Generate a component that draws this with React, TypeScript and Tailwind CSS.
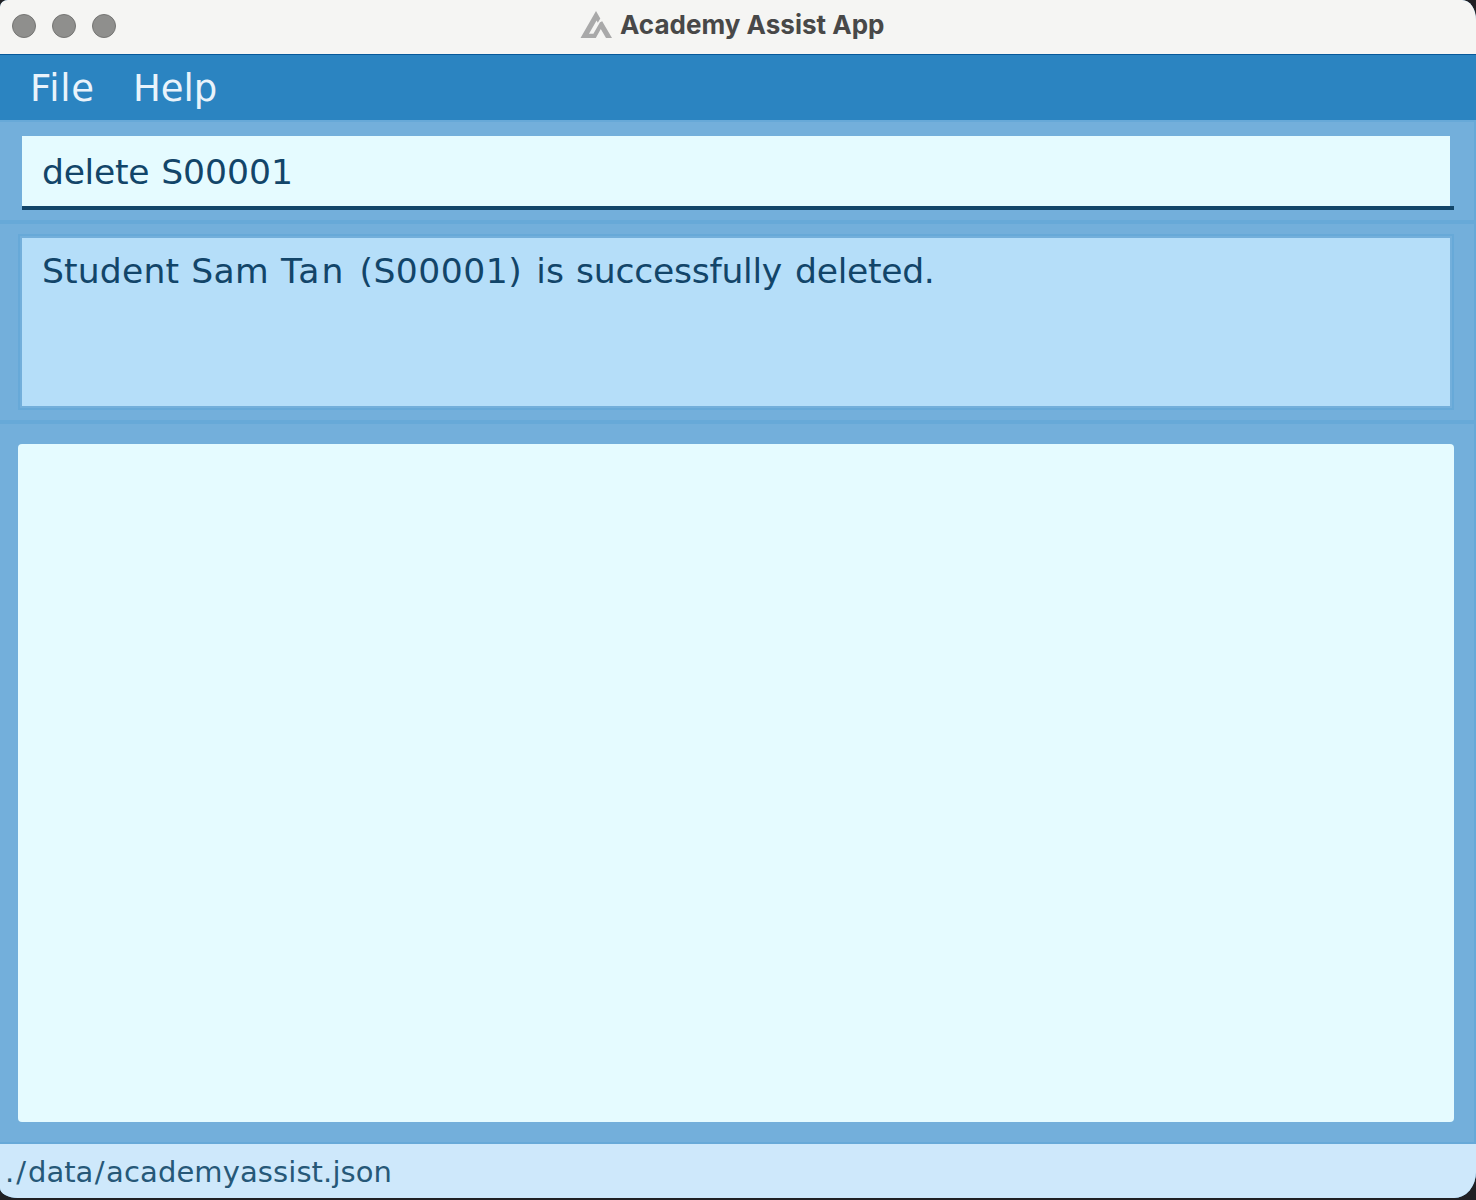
import React from "react";

function TitleBar() {
  return (
    <header className="relative flex h-[54px] shrink-0 items-center bg-[#f5f5f3]">
      <div className="flex gap-4 pl-3 -mt-0.5">
        {[0, 1, 2].map((i) => (
          <span key={i} className="size-6 rounded-full border border-[#757573] bg-[#8f8f8d]" />
        ))}
      </div>
      <div className="absolute left-[580px] top-0 flex h-[50px] items-center">
        <svg width="33" height="28" viewBox="0 0 33 28" className="shrink-0" fill="#a9a9a9">
          <path d="M16 0 L20.3 7.5 L17.8 11.8 L16.6 9.6 L9 22.8 H13.4 L20 11.2 L22.2 10.2 L32 27 H26 L20.8 18 L15.8 27 H0.5 Z" />
        </svg>
        <h1 className="ml-[7px] whitespace-nowrap font-['Inter',sans-serif] text-[26px] font-bold leading-none tracking-[0.02px] text-[#484848]">
          Academy Assist App
        </h1>
      </div>
    </header>
  );
}

function MenuBar() {
  return (
    <nav className="flex h-[66px] shrink-0 items-center border-t border-[#07599a] bg-[#2b84c1] pl-[30px] pt-0.5 text-[37px] leading-none text-[#e9f3fb]">
      <span className="w-[103px] tracking-[0.7px]">File</span>
      <span>Help</span>
    </nav>
  );
}

export default function App() {
  return (
    <div className="h-[1200px] w-[1476px] overflow-hidden bg-[#202024] font-['DejaVu_Sans',sans-serif]">
      <div className="flex h-[1198px] flex-col overflow-hidden rounded-[8px_14px_22px_18px/7px_20px_26px_10px] bg-[#73afdb]">
        <TitleBar />
        <MenuBar />
        <main className="flex h-[1024px] shrink-0 flex-col border-y-2 border-r-2 border-[#67a9d8]">
          <section className="h-[98px] shrink-0 pl-[22px] pt-[14px]">
            <div className="h-[70px] w-[1428px] bg-[#e5fbff] pl-5 text-[34.6px] leading-[72px] text-[#124569]">
              <span className="mr-px tracking-[-0.3px]">delete</span> <span>S00001</span>
            </div>
            <div className="h-1 w-[1432px] bg-[#124569]" />
          </section>
          <section className="h-[204px] shrink-0 border-y-4 border-[#67a9d8] pl-[18px] pt-[10px]">
            <div className="h-[176px] w-[1436px] border-2 border-[#67a9d8] p-0.5">
              <p className="h-full whitespace-nowrap bg-[#b5def9] pl-5 text-[34.6px] leading-[66px] text-[#124569]">
                <span className="mr-px tracking-[0.15px]">Student</span>{" "}
                <span className="mr-px tracking-[0.3px]">Sam</span>{" "}
                <span className="mr-[3px] tracking-[2px]">Tan</span>{" "}
                <span className="mr-[3px] tracking-[0.5px]">(S00001)</span>{" "}
                <span className="mr-px">is</span>{" "}
                <span className="mr-0.5 tracking-[-0.25px]">successfully</span>{" "}
                <span className="tracking-[-0.3px]">deleted.</span>
              </p>
            </div>
          </section>
          <section className="pl-[18px] pt-5">
            <div className="h-[678px] w-[1436px] rounded bg-[#e5fbff]" />
          </section>
        </main>
        <footer className="h-[54px] shrink-0 bg-[#cee8fb] pl-[5px] text-[29px] leading-[56px] text-[#265878]">
          <span className="tracking-[2px]">./</span>
          <span className="mr-[1.5px]">data</span>
          <span className="mr-[1.5px]">/</span>
          <span className="tracking-[0.1px]">academyassist.json</span>
        </footer>
      </div>
    </div>
  );
}
